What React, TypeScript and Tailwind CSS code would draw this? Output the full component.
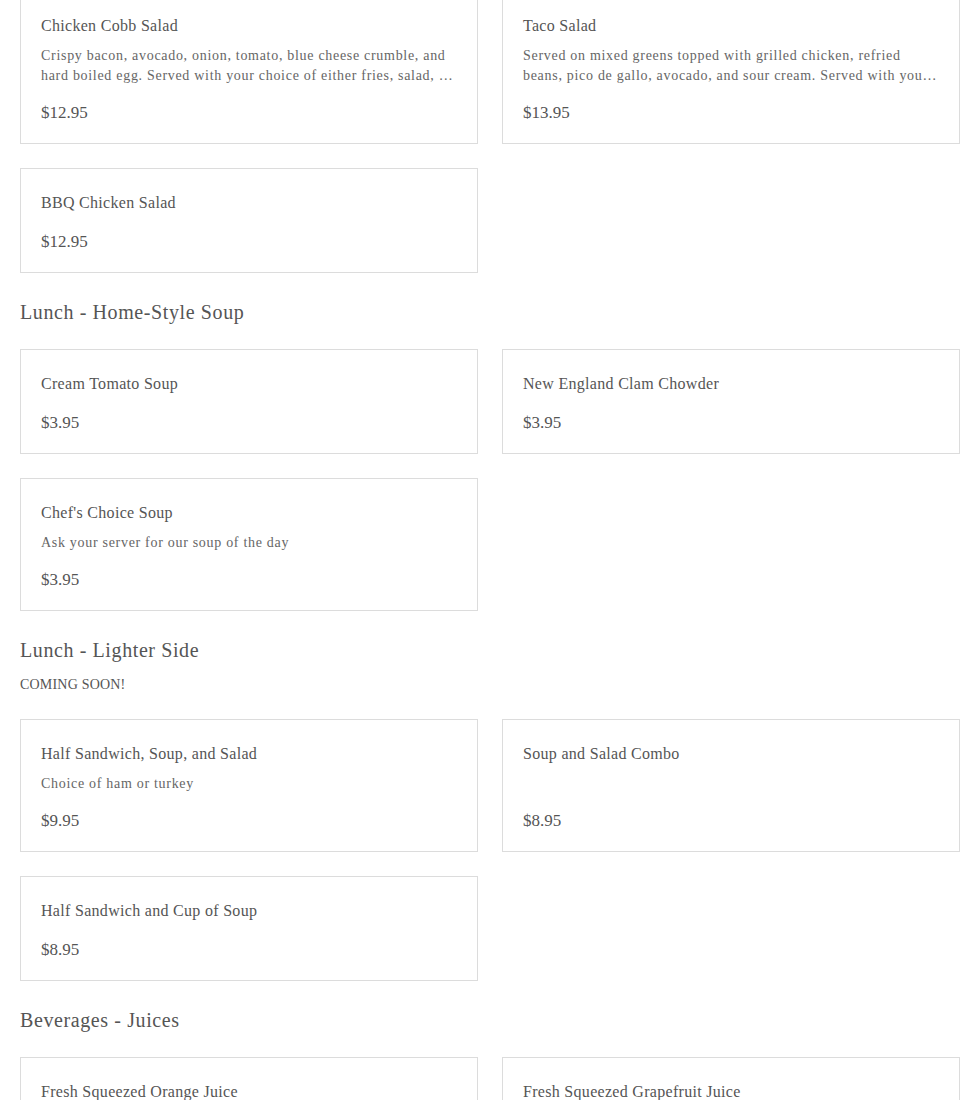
import React from "react";

interface MenuItem {
  name: string;
  description?: string;
  price: string;
}

interface MenuSection {
  title?: string;
  note?: string;
  items: MenuItem[];
}

const sections: MenuSection[] = [
  {
    items: [
      {
        name: "Chicken Cobb Salad",
        description:
          "Crispy bacon, avocado, onion, tomato, blue cheese crumble, and hard boiled egg. Served with your choice of either fries, salad, or soup.",
        price: "$12.95",
      },
      {
        name: "Taco Salad",
        description:
          "Served on mixed greens topped with grilled chicken, refried beans, pico de gallo, avocado, and sour cream. Served with your choice of dressing.",
        price: "$13.95",
      },
      { name: "BBQ Chicken Salad", price: "$12.95" },
    ],
  },
  {
    title: "Lunch - Home-Style Soup",
    items: [
      { name: "Cream Tomato Soup", price: "$3.95" },
      { name: "New England Clam Chowder", price: "$3.95" },
      {
        name: "Chef's Choice Soup",
        description: "Ask your server for our soup of the day",
        price: "$3.95",
      },
    ],
  },
  {
    title: "Lunch - Lighter Side",
    note: "COMING SOON!",
    items: [
      {
        name: "Half Sandwich, Soup, and Salad",
        description: "Choice of ham or turkey",
        price: "$9.95",
      },
      { name: "Soup and Salad Combo", price: "$8.95" },
      { name: "Half Sandwich and Cup of Soup", price: "$8.95" },
    ],
  },
  {
    title: "Beverages - Juices",
    items: [
      { name: "Fresh Squeezed Orange Juice", price: "$3.95" },
      { name: "Fresh Squeezed Grapefruit Juice", price: "$3.95" },
    ],
  },
];

const MenuCard: React.FC<{ item: MenuItem }> = ({ item }) => (
  <div className="flex flex-col border border-[#dcdcdc] bg-white px-5 pt-6 pb-[19px]">
    <h3 className="text-[16px] leading-5 tracking-[0.3px] text-[#555]">
      {item.name}
    </h3>
    {item.description && (
      <p className="mt-[10px] line-clamp-2 text-[14px] leading-5 tracking-[0.7px] text-[#666]">
        {item.description}
      </p>
    )}
    <div
      className={
        item.description
          ? "mt-auto pt-4 text-[17px] leading-[22px] text-[#555]"
          : "mt-auto pt-[18px] text-[17px] leading-[22px] text-[#555]"
      }
    >
      {item.price}
    </div>
  </div>
);

export default function App() {
  return (
    <div className="h-[1100px] overflow-hidden bg-white font-['Liberation_Serif',serif]">
      <div className="ml-5 -mt-[9px] w-[940px]">
        {sections.map((section, i) => (
          <section key={i}>
            {section.title && (
              <h2 className="pt-[25px] text-[20px] leading-7 tracking-[0.6px] text-[#555]">
                {section.title}
              </h2>
            )}
            {section.note && (
              <p className="mt-[11px] text-[14px] leading-5 tracking-[0.2px] text-[#555]">
                {section.note}
              </p>
            )}
            <div
              className={
                section.note
                  ? "mt-6 grid grid-cols-2 gap-6"
                  : section.title
                  ? "mt-[23px] grid grid-cols-2 gap-6"
                  : "grid grid-cols-2 gap-6"
              }
            >
              {section.items.map((item) => (
                <MenuCard key={item.name} item={item} />
              ))}
            </div>
          </section>
        ))}
      </div>
    </div>
  );
}
